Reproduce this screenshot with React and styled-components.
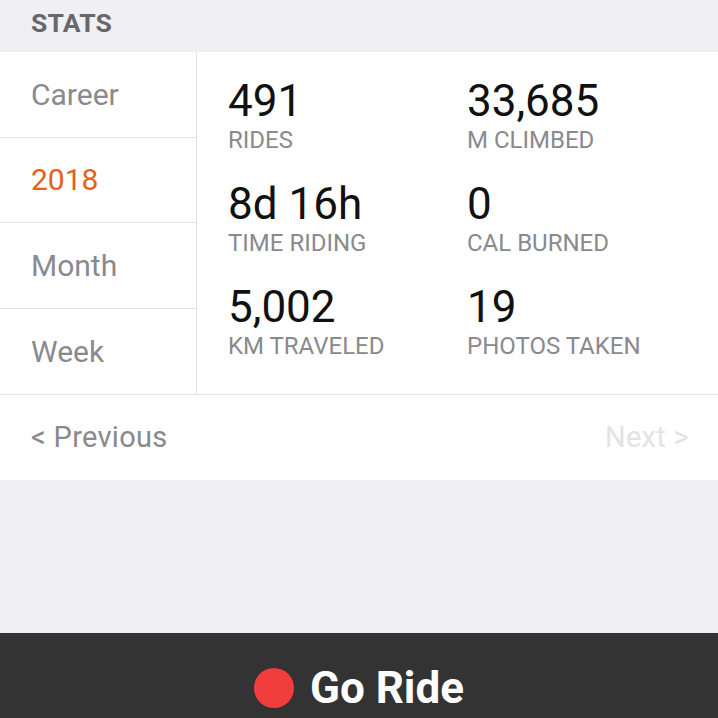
import React from "react";
import styled, { createGlobalStyle } from "styled-components";

const Global = createGlobalStyle`
  html, body { margin: 0; padding: 0; background: #efeff4; overflow: hidden; }
  body { font-family: Roboto, "Liberation Sans", Arial, sans-serif; }
  * { box-sizing: border-box; }
`;

const Page = styled.div`
  width: 718px;
  height: 718px;
  display: flex;
  flex-direction: column;
  background: #efeff4;
  overflow: hidden;
`;

const Header = styled.div`
  height: 52px;
  padding: 10px 31px 0;
  font-size: 26.5px;
  line-height: 1;
  font-weight: 700;
  color: #68686c;
  letter-spacing: 0.2px;
`;

const Card = styled.div`
  background: #fff;
`;

const Top = styled.div`
  display: flex;
  border-bottom: 1px solid #e2e2e4;
`;

const Tabs = styled.div`
  width: 197px;
  border-right: 1px solid #e2e2e4;
  display: flex;
  flex-direction: column;
`;

const Tab = styled.div`
  height: ${(p) => (p.$last ? "85px" : "85.5px")};
  padding-left: 31px;
  display: flex;
  align-items: center;
  font-size: 30px;
  color: ${(p) => (p.$active ? "#e2611e" : "#8a8a8e")};
  border-bottom: ${(p) => (p.$last ? "none" : "1px solid #e2e2e4")};
`;

const Grid = styled.div`
  flex: 1;
  display: grid;
  grid-template-columns: 239px 1fr;
  row-gap: 30px;
  padding: 27px 0 0 31px;
  align-content: start;
`;

const Cell = styled.div`
  display: flex;
  flex-direction: column;
  gap: 4px;
`;

const Value = styled.div`
  font-size: 44px;
  line-height: 45px;
  color: #111;
`;

const Label = styled.div`
  font-size: 24px;
  line-height: 24px;
  color: #8a8a8e;
`;

const Pager = styled.div`
  height: 85px;
  display: flex;
  align-items: center;
  justify-content: space-between;
  padding: 0 29px 0 31px;
  font-size: 29px;
`;

const PageLink = styled.span`
  color: ${(p) => (p.$disabled ? "#e3e3e5" : "#8a8a8e")};
  letter-spacing: 0.3px;
`;

const Spacer = styled.div`
  flex: 1;
`;

const Bar = styled.div`
  flex: 0 0 110px;
  margin-bottom: -25px;
  background: #333333;
  display: flex;
  align-items: center;
  justify-content: center;
  gap: 16px;
`;

const Dot = styled.div`
  width: 40px;
  height: 40px;
  border-radius: 50%;
  background: #f23d3d;
`;

const GoText = styled.span`
  font-size: 44px;
  font-weight: 700;
  color: #fff;
  line-height: 1;
`;

const stats = [
  ["491", "RIDES"],
  ["33,685", "M CLIMBED"],
  ["8d 16h", "TIME RIDING"],
  ["0", "CAL BURNED"],
  ["5,002", "KM TRAVELED"],
  ["19", "PHOTOS TAKEN"],
];

const tabs = ["Career", "2018", "Month", "Week"];

export default function App() {
  return (
    <Page>
      <Global />
      <Header>STATS</Header>
      <Card>
        <Top>
          <Tabs>
            {tabs.map((t, i) => (
              <Tab key={t} $active={t === "2018"} $last={i === tabs.length - 1}>
                {t}
              </Tab>
            ))}
          </Tabs>
          <Grid>
            {stats.map(([v, l]) => (
              <Cell key={l}>
                <Value>{v}</Value>
                <Label>{l}</Label>
              </Cell>
            ))}
          </Grid>
        </Top>
        <Pager>
          <PageLink>&lt; Previous</PageLink>
          <PageLink $disabled>Next &gt;</PageLink>
        </Pager>
      </Card>
      <Spacer />
      <Bar>
        <Dot />
        <GoText>Go Ride</GoText>
      </Bar>
    </Page>
  );
}
